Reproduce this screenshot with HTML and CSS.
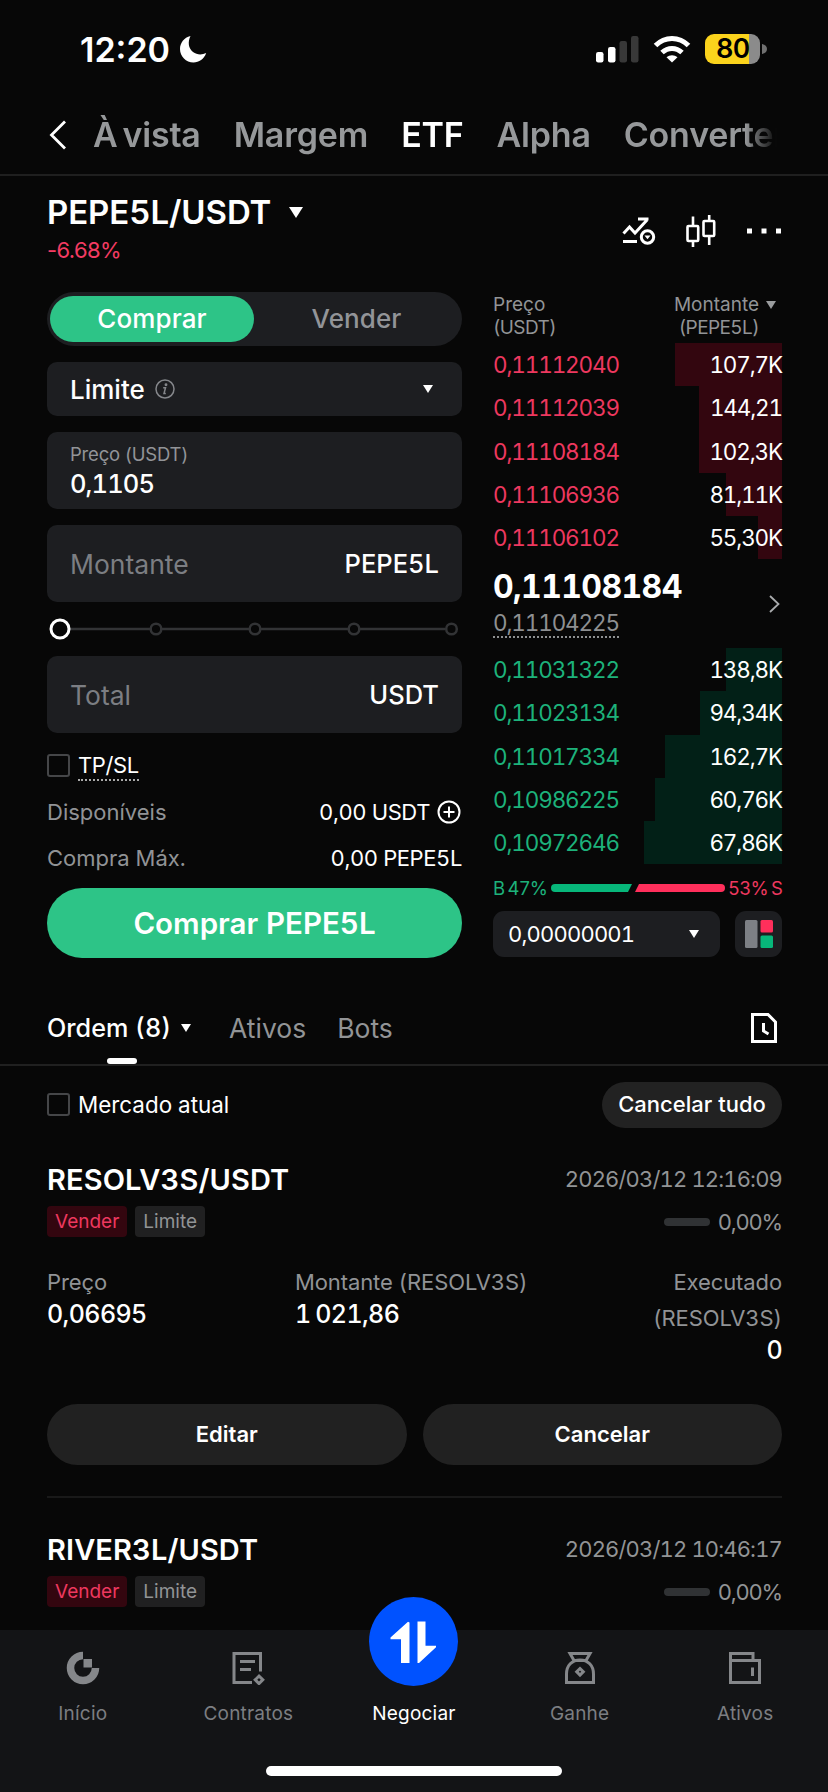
FILE: index.html
```html
<!DOCTYPE html>
<html lang="pt">
<head>
<meta charset="utf-8">
<title>PEPE5L/USDT</title>
<link rel="stylesheet" href="styles.css">
</head>
<body>
<div class="app">
  <header class="status">
    <span class="clock">12:20</span>
    <svg class="moon" width="28" height="28" viewBox="0 0 28 28"><path d="M11.500 1C8.500 7 9.500 13.500 14 17c4 3 9 3 13.200 1C25 24 20 27.500 14.500 27.500 7 27.500 1 21.500 1 14 1 8 5 2.500 11.500 1Z" fill="#fff"/></svg>
    <svg class="signal" width="44" height="28" viewBox="0 0 44 28"><rect x="0" y="17" width="7.500" height="10.500" rx="2.200" fill="#fff"/><rect x="12" y="12" width="7.500" height="15.500" rx="2.200" fill="#fff"/><rect x="23.500" y="6" width="7.500" height="21.500" rx="2.200" fill="#383838"/><rect x="35" y="1" width="7.500" height="26.500" rx="2.200" fill="#383838"/></svg>
    <svg class="wifi" width="38" height="28" viewBox="0 0 38 28" fill="none" stroke="#fff" stroke-width="5"><path d="M2.500 10.500C12 1 26 1 35.500 10.500"/><path d="M9 17.500c6-5.500 14-5.500 20 0"/><path d="M19 27.500l-5.500-5.300c3-2.700 8-2.700 11 0Z" fill="#fff" stroke="none"/></svg>
    <div class="battery">80</div>
    <svg class="cap" width="5" height="10" viewBox="0 0 5 10"><path d="M0 0q5 1 5 5t-5 5Z" fill="#707070"/></svg>
  </header>

  <nav class="tabs">
    <svg class="back" width="18" height="30" viewBox="0 0 18 30" fill="none" stroke="#fff" stroke-width="2.800"><path d="M16 1.500 2.500 15 16 28.500"/></svg>
    <div class="tablist"><span class="t1">À vista</span><span>Margem</span><span class="on">ETF</span><span>Alpha</span><span>Converter</span></div>
  </nav>

  <section class="pair">
    <div>
      <div class="pairname"><span>PEPE5L/USDT</span><i class="caret big"></i></div>
      <div class="change">-6.68%</div>
    </div>
    <div class="tools">
      <svg width="34" height="28" viewBox="0 0 34 28" fill="none" stroke="#fff" stroke-width="3"><path d="M1.500 16.500 7.500 10l5.500 6L25 3M16 2h10.500M1 24.500h14"/><circle cx="25.500" cy="20" r="6.200"/><path d="M22.500 18.500h6L25.500 22.300Z" fill="#fff" stroke="none"/></svg>
      <svg width="30" height="32" viewBox="0 0 30 32" fill="none" stroke="#fff" stroke-width="2.600"><path d="M7 1.500v9M7 26.500V32M23.200 0v5.500M23.200 21.500V30"/><rect x="1.500" y="11" width="10.700" height="15" rx="1"/><rect x="17.500" y="6" width="10.700" height="15" rx="1"/></svg>
      <svg width="36" height="6" viewBox="0 0 36 6" fill="#fff"><path d="M1 .5h5v5H1zM15.500 .5h5v5h-5zM30 .5h5v5h-5z"/></svg>
    </div>
  </section>

  <main class="trade">
    <section class="form">
      <div class="side"><span class="buy">Comprar</span><span class="sell">Vender</span></div>
      <div class="field type"><span>Limite</span><svg width="20" height="20" viewBox="0 0 20 20" fill="none" stroke="#85878b" stroke-width="1.500"><circle cx="10" cy="10" r="9"/><path d="M8.200 8.700h2.300l-1.500 5.800h1.800"/><circle cx="11" cy="5.700" r=".7" fill="#85878b"/></svg><i class="caret"></i></div>
      <div class="field price"><small>Preço (USDT)</small><b>0,1105</b></div>
      <div class="field amount"><span>Montante</span><b>PEPE5L</b></div>
      <svg class="slider" width="415" height="22" viewBox="0 0 415 22" fill="#070707" stroke="#323335" stroke-width="2.500"><path d="M22 11h376"/><circle cx="109" cy="11" r="5.300"/><circle cx="208" cy="11" r="5.300"/><circle cx="307" cy="11" r="5.300"/><circle cx="404.500" cy="11" r="5.300"/><circle cx="13" cy="11" r="9" stroke="#fff" stroke-width="3"/></svg>
      <div class="field total"><span>Total</span><b>USDT</b></div>
      <div class="tpsl"><i class="box"></i><span>TP/SL</span></div>
      <div class="info i1"><span>Disponíveis</span><b>0,00 USDT</b><svg width="24" height="24" viewBox="0 0 24 24" fill="none" stroke="#fff" stroke-width="2"><circle cx="12" cy="12" r="10.500"/><path d="M12 6.500v11M6.500 12h11"/></svg></div>
      <div class="info i2"><span>Compra Máx.</span><b>0,00 PEPE5L</b></div>
      <div class="submit">Comprar PEPE5L</div>
    </section>

    <section class="book">
      <div class="head"><div>Preço<br><span class="unit">(USDT)</span></div><div class="hr">Montante<br><span class="unit">(PEPE5L)</span></div><i class="caret gray"></i></div>
      <div class="row ask"><span>0,11112040</span><b>107,7K</b><i style="width:107px"></i></div>
      <div class="row ask"><span>0,11112039</span><b>144,21</b><i style="width:83px"></i></div>
      <div class="row ask"><span>0,11108184</span><b>102,3K</b><i style="width:83px"></i></div>
      <div class="row ask"><span>0,11106936</span><b>81,11K</b><i style="width:56px"></i></div>
      <div class="row ask"><span>0,11106102</span><b>55,30K</b><i style="width:24px"></i></div>
      <div class="last"><div><strong>0,11108184</strong><span>0,11104225</span></div><svg width="11" height="18" viewBox="0 0 11 18" fill="none" stroke="#a9abad" stroke-width="1.800"><path d="M1 1l8.500 8L1 17"/></svg></div>
      <div class="row bid"><span>0,11031322</span><b>138,8K</b><i style="width:56px"></i></div>
      <div class="row bid"><span>0,11023134</span><b>94,34K</b><i style="width:82px"></i></div>
      <div class="row bid"><span>0,11017334</span><b>162,7K</b><i style="width:117px"></i></div>
      <div class="row bid"><span>0,10986225</span><b>60,76K</b><i style="width:127px"></i></div>
      <div class="row bid"><span>0,10972646</span><b>67,86K</b><i style="width:138px"></i></div>
      <div class="ratio"><span class="g">B 47%</span><svg width="174" height="8" viewBox="0 0 174 8"><path d="M4 0h77l-4 8H4a4 4 0 0 1 0-8Z" fill="#07b77a"/><path d="M88 0h82a4 4 0 0 1 0 8H84Z" fill="#ff2f5b"/></svg><span class="r">53% S</span></div>
      <div class="prec"><div class="precbox"><span>0,00000001</span><i class="caret"></i></div><div class="layout"><svg width="28" height="28" viewBox="0 0 28 28"><rect width="12.500" height="28" rx="1.500" fill="#7d8085"/><rect x="15.500" width="12.500" height="12.500" rx="1.500" fill="#ff2f5b"/><rect x="15.500" y="15.500" width="12.500" height="12.500" rx="1.500" fill="#07b77a"/></svg></div></div>
    </section>
  </main>

  <section class="ordertabs">
    <span class="o1">Ordem (8)</span><i class="caret"></i><span class="o2">Ativos</span><span class="o3">Bots</span>
    <svg width="26" height="30" viewBox="0 0 26 30" fill="none" stroke="#fff" stroke-width="3"><path d="M1.500 1.500h15.500L24.500 9v19.500H1.500ZM12.500 10v8l5 3"/></svg>
    <i class="mark"></i>
  </section>

  <section class="filter"><i class="box"></i><span class="fl">Mercado atual</span><span class="all">Cancelar tudo</span></section>

  <article class="order">
    <div class="top"><h2>RESOLV3S/USDT</h2><time>2026/03/12 12:16:09</time></div>
    <div class="tags"><span class="tag red">Vender</span><span class="tag">Limite</span><i></i><span class="pct">0,00%</span></div>
    <div class="cols"><div><small>Preço</small><b>0,06695</b></div><div><small>Montante (RESOLV3S)</small><b>1 021,86</b></div><div class="exec"><small>Executado<br>(RESOLV3S)</small><b>0</b></div></div>
    <div class="btns"><span>Editar</span><span>Cancelar</span></div>
  </article>
  <article class="order second">
    <div class="top"><h2>RIVER3L/USDT</h2><time>2026/03/12 10:46:17</time></div>
    <div class="tags"><span class="tag red">Vender</span><span class="tag">Limite</span><i></i><span class="pct">0,00%</span></div>
  </article>

  <footer class="bottom">
    <div class="items">
      <div><svg width="34" height="34" viewBox="0 0 34 34"><path d="M17 4.500A12.500 12.500 0 1 0 29.500 17" fill="none" stroke="#85878a" stroke-width="7.500"/><path d="M17.500 8h8.500v8.500h-8.500Z" fill="#85878a"/></svg><span>Início</span></div>
      <div><svg width="34" height="34" viewBox="0 0 34 34" fill="none" stroke="#85878a" stroke-width="3"><path d="M21 31.500H3v-29h26.500v18M9 10.500h15M9 18.500h11"/><path d="m28 25 3.800 3.800-3.800 3.800-3.800-3.800Z"/></svg><span>Contratos</span></div>
      <div class="active"><svg width="89" height="89" viewBox="-21.500 -24.500 89 89" fill="#fff"><path d="M17.500 .3 19 1v40.500h-8.500V17.700H0V16ZM27 0h8v24.200h10.500v1.600L28.500 41.500H27Z"/></svg><span>Negociar</span></div>
      <div><svg width="34" height="34" viewBox="0 0 34 34" fill="none" stroke="#85878a" stroke-width="3"><path d="M7 2.500h20l-4 7H11ZM3.500 31.500V23C3.500 14.500 9 9 17 9s13.500 5.500 13.500 14v8.500Z"/><path d="m17 17.500 3.300 3.300-3.300 3.300-3.300-3.300Z"/></svg><span>Ganhe</span></div>
      <div><svg width="34" height="34" viewBox="0 0 34 34" fill="none" stroke="#85878a" stroke-width="3"><path d="M2.500 9.500v22h29v-22H2.500v-7H25v7M24.500 16.500V25"/></svg><span>Ativos</span></div>
    </div>
    <div class="home"></div>
  </footer>
</div>
</body>
</html>
```
FILE: styles.css
```css
* { box-sizing: border-box; }
body { margin: 0; background: #070707; }
.app { width: 828px; height: 1792px; overflow: hidden; position: relative; color: #fff; font-family: Inter, "Liberation Sans", sans-serif; font-feature-settings: "tnum"; font-size: 22px; display: flex; flex-direction: column; }
i, b, small, h2, time { font-style: normal; font-weight: inherit; font-size: inherit; margin: 0; display: block; }
svg { display: block; flex: none; }
span { white-space: nowrap; }
.caret { width: 0; height: 0; border: 5.5px solid transparent; border-top: 8px solid #fff; border-bottom: 0; flex: none; }
.caret.big { border-width: 11px 7px 0; }
.caret.gray { border-top-color: #9a9c9e; }
.status { height: 98px; display: flex; align-items: center; padding-left: 80px; flex: none; }
.clock { font-size: 34px; font-weight: 600; width: 90px; font-feature-settings: normal; }
.moon { margin-left: 9px; }
.signal { margin-left: 389px; }
.wifi { margin-left: 13px; }
.battery { margin-left: 14px; width: 55px; height: 30px; border-radius: 9px; background: linear-gradient(90deg, #fbd31c 44px, #8b8b8b 44px); color: #000; font-size: 27px; font-weight: 600; line-height: 30px; padding-left: 11px; letter-spacing: -0.8px; }
.cap { margin-left: 2px; }
.tabs { height: 78px; border-bottom: 2px solid #1f1f1f; display: flex; align-items: center; padding: 0 0 3px 49px; flex: none; }
.tablist { margin-left: 26px; width: 690px; overflow: hidden; display: flex; gap: 33px; font-size: 34px; font-weight: 600; line-height: 50px; letter-spacing: -0.2px; color: #96989a; -webkit-mask-image: linear-gradient(90deg, #000 652px, transparent 684px); mask-image: linear-gradient(90deg, #000 652px, transparent 684px); }
.t1 { word-spacing: -4px; }
.tablist .on { color: #fff; }
.pair { height: 116px; flex: none; padding: 16px 46px 0 47px; display: flex; justify-content: space-between; }
.pairname { display: flex; align-items: center; gap: 18px; font-size: 33px; font-weight: 600; line-height: 40px; letter-spacing: -0.1px; }
.change { color: #f33b62; line-height: 28px; margin-top: 4px; font-feature-settings: normal; letter-spacing: -0.6px; }
.tools { display: flex; align-items: center; gap: 30px; height: 78px; }
.trade { display: flex; height: 666px; padding: 0 46px 0 47px; gap: 31px; flex: none; }
.form { width: 415px; flex: none; }
.side { height: 54px; border-radius: 27px; background: #1d1e21; display: flex; padding: 4px 3px; font-size: 26px; letter-spacing: .1px; font-weight: 500; line-height: 46px; text-align: center; }
.buy { width: 204px; border-radius: 23px; background: #2dc487; }
.sell { flex: 1; color: #929498; }
.field { background: #1d1e21; border-radius: 10px; padding: 0 23px; display: flex; align-items: center; font-size: 26px; }
.field b { font-weight: 500; font-size: 25.5px; }
.type { margin-top: 16px; height: 54px; font-weight: 500; }
.type svg { margin-left: 10px; }
.type .caret { margin-left: auto; margin-right: 6px; }
.price { margin-top: 16px; height: 77px; flex-direction: column; align-items: flex-start; justify-content: center; padding-bottom: 1px; }
.price small { font-size: 18.500px; letter-spacing: -0.2px; line-height: 26px; color: #929498; }
.price b { line-height: 33px; letter-spacing: -0.9px; }
.amount, .total { margin-top: 16px; height: 77px; justify-content: space-between; color: #7c7e83; }
.amount span, .total span { font-size: 26.5px; }
.amount b, .total b { color: #fff; }
.slider { margin-top: 16px; }
.box { width: 23px; height: 23px; border: 2px solid #454648; border-radius: 3px; flex: none; }
.tpsl { margin-top: 19px; height: 26px; display: flex; align-items: center; gap: 8px; letter-spacing: -0.4px; }
.tpsl span { border-bottom: 2px dotted #aaa; line-height: 27px; margin-top: 3px; }
.info { display: flex; align-items: center; height: 46px; }
.info span { color: #919396; margin-right: auto; }
.info b { letter-spacing: -0.4px; }
.info svg { margin-left: 7px; margin-right: 1px; }
.i1 { margin-top: 11px; }
.submit { margin-top: 7px; height: 70px; border-radius: 35px; background: #2dc487; text-align: center; line-height: 70px; font-size: 29.5px; font-weight: 600; }
.book { width: 289px; flex: none; }
.head { display: flex; height: 51px; padding-top: 1px; font-size: 19px; line-height: 23px; color: #929496; }
.hr { margin-left: auto; text-align: right; }
.unit { letter-spacing: -0.6px; }
.head .caret { margin: 8px 6px 0 7px; }
.row { position: relative; display: flex; justify-content: space-between; align-items: center; height: 43.300px; padding: 0; }
.row i { position: absolute; right: 0; top: 0; bottom: 0; }
.row span, .row b { position: relative; z-index: 1; font-size: 22.5px; letter-spacing: -1.15px; }
.ask span { color: #ee385f; }
.ask i { background: #33060f; }
.bid span { color: #1db27b; }
.bid i { background: #022017; }
.last { height: 88.500px; display: flex; justify-content: space-between; padding: 10px 2px 0 0; }
.last strong { display: block; font-size: 32px; font-weight: 700; line-height: 36px; letter-spacing: -0.6px; }
.last span { display: inline-block; color: #8e9092; line-height: 26px; margin-top: 5px; border-bottom: 2px dotted #8e9092; font-size: 22.5px; letter-spacing: -1.15px; }
.last svg { margin-top: 26px; }
.ratio { height: 47px; display: flex; align-items: center; justify-content: space-between; font-size: 18.5px; letter-spacing: -0.8px; word-spacing: -1px; }
.g { color: #1db27b; }
.r { color: #ee385f; }
.prec { display: flex; justify-content: space-between; }
.precbox { width: 227px; height: 46px; border-radius: 11px; background: #1d1e21; display: flex; align-items: center; justify-content: space-between; padding: 0 21px 0 15px; letter-spacing: -0.8px; }
.layout { width: 47px; height: 46px; border-radius: 11px; background: #1d1e21; display: grid; place-items: center; }
.ordertabs { position: relative; height: 108px; border-bottom: 2px solid #202020; display: flex; align-items: center; padding: 34px 51px 0 47px; flex: none; font-size: 26.5px; color: #929496; }
.o1 { color: #fff; font-weight: 500; font-size: 25.2px; }
.ordertabs .caret { margin-left: 10px; }
.o2 { margin-left: 38px; }
.o3 { margin-left: 31px; }
.ordertabs svg { margin-left: auto; }
.mark { position: absolute; left: 107px; bottom: 0; width: 30px; height: 6px; border-radius: 3px; background: #fff; }
.filter { height: 77px; display: flex; align-items: center; padding: 0 46px 0 47px; flex: none; }
.fl { margin-left: 8px; font-size: 22.4px; }
.all { margin-left: auto; width: 180px; height: 46px; border-radius: 23px; background: #222; line-height: 45px; text-align: center; font-weight: 500; }
.order { margin: 0 46px 0 47px; height: 355px; border-bottom: 2px solid #191919; padding-top: 18px; flex: none; }
.order.second { height: 135px; border: 0; padding-top: 33px; }
.top { display: flex; justify-content: space-between; align-items: center; height: 36px; }
.top h2 { font-size: 29px; font-weight: 600; letter-spacing: .1px; }
.top time { color: #929496; letter-spacing: -0.85px; }
.tags { display: flex; align-items: center; margin-top: 9px; font-size: 19px; color: #929496; }
.tag { background: #202021; border-radius: 4px; padding: 0 8px; height: 31px; line-height: 31px; margin-right: 8px; }
.tag.red { background: #33060f; color: #ee385f; }
.tags i { margin-left: auto; width: 46px; height: 8px; border-radius: 4px; background: #303234; margin-right: 8px; }
.pct { font-size: 22px; letter-spacing: -1.2px; }
.cols { display: grid; grid-template-columns: 248px 1fr 160px; margin-top: 27px; height: 140px; }
.cols small { color: #919396; line-height: 36px; letter-spacing: -0.1px; }
.cols b { font-size: 25px; line-height: 28px; font-weight: 500; letter-spacing: -0.6px; word-spacing: -1.5px; }
.exec { text-align: right; }
.btns { display: grid; grid-template-columns: 1fr 1fr; gap: 16px; text-align: center; font-weight: 600; line-height: 61px; }
.btns span { background: #212121; border-radius: 31px; }
.bottom { position: absolute; left: 0; right: 0; bottom: 0; height: 162px; background: #131416; }
.items { display: grid; grid-template-columns: repeat(5, 1fr); color: #7c7e82; font-size: 19px; letter-spacing: .2px; text-align: center; }
.items > div { display: flex; flex-direction: column; align-items: center; padding-top: 21px; }
.items span { line-height: 26px; margin-top: 16px; }
.items .active { color: #fff; padding: 0; margin-top: -33px; }
.active svg { border-radius: 50%; background: #0052ff; }
.items .active span { margin-top: 15px; }
.home { width: 296px; height: 10px; border-radius: 5px; background: #fff; margin: 39px auto 0; }
```
